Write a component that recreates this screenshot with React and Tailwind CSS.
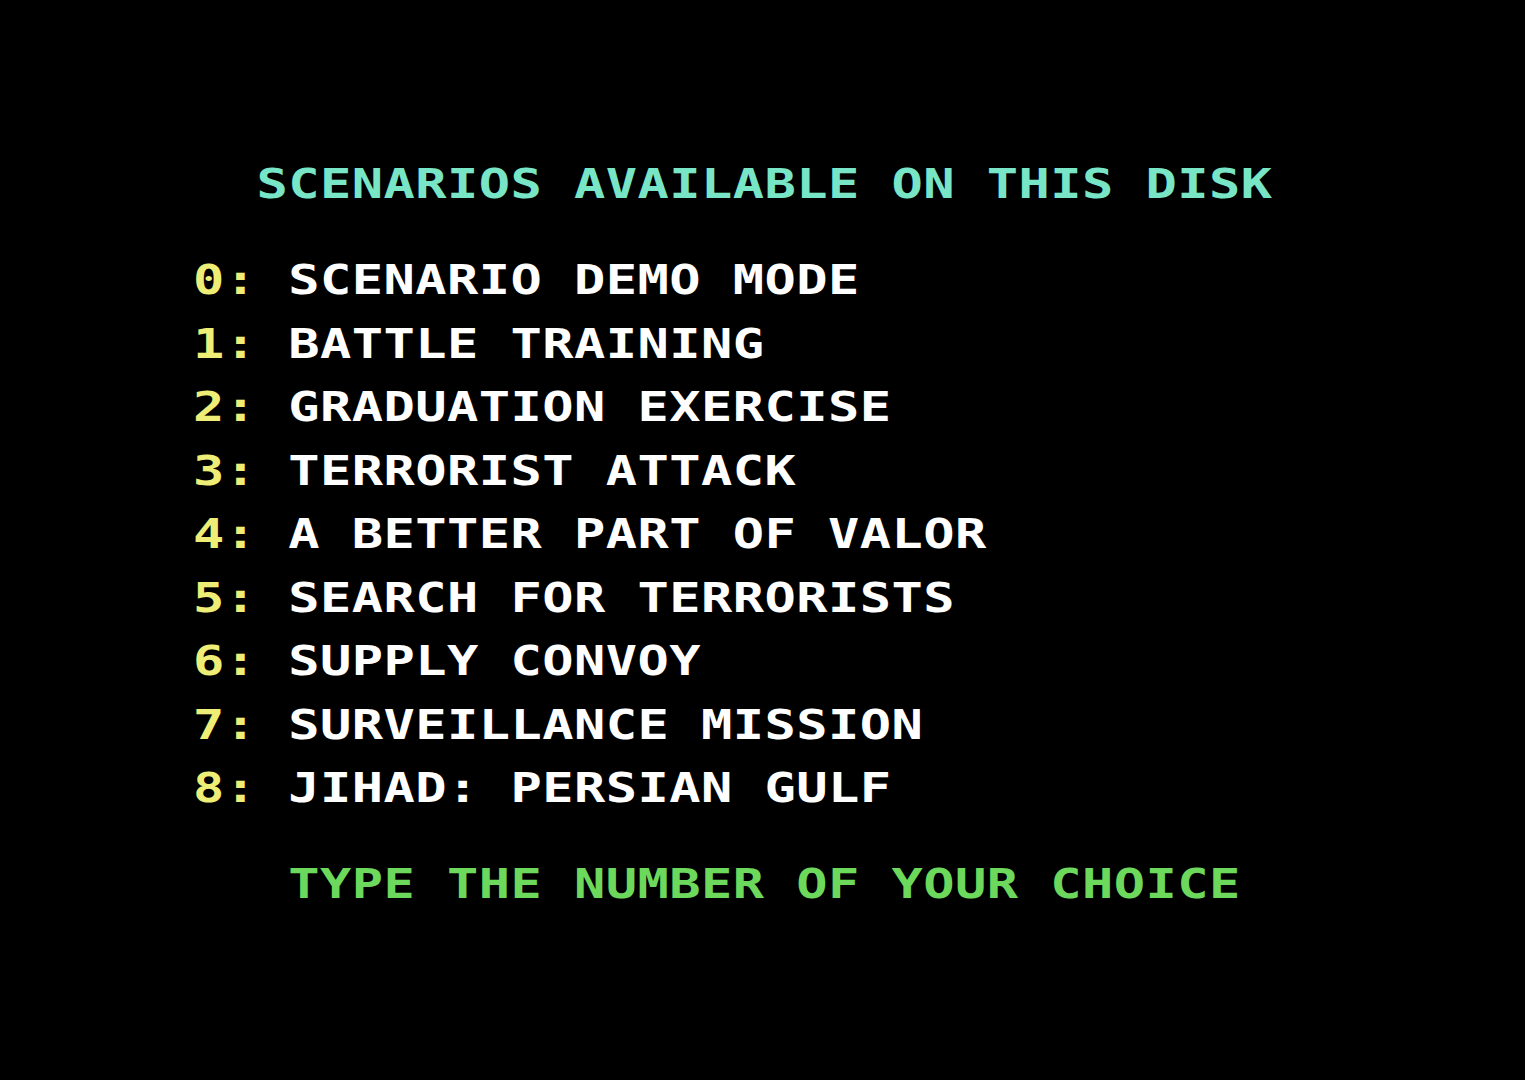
import React from 'react';

const scenarios = [
  'SCENARIO DEMO MODE',
  'BATTLE TRAINING',
  'GRADUATION EXERCISE',
  'TERRORIST ATTACK',
  'A BETTER PART OF VALOR',
  'SEARCH FOR TERRORISTS',
  'SUPPLY CONVOY',
  'SURVEILLANCE MISSION',
  'JIHAD: PERSIAN GULF',
];

// one text row of the C64 screen: 31.75px cell, rows are double spaced
const Row = ({ className = '', children }) => (
  <div className={`h-[31.75px] leading-[31.75px] whitespace-pre ${className}`}>{children}</div>
);

export default function App() {
  return (
    <div className="w-[1525px] h-[1080px] bg-black overflow-hidden font-['DejaVu_Sans_Mono',monospace] font-bold text-[40px] tracking-[0.34px]">
      <div className="pt-[169px] pl-[193px]">
        <div className="origin-left scale-x-[1.3] flex flex-col">
          <Row className="text-[#78e6c6]">{'  SCENARIOS AVAILABLE ON THIS DISK'}</Row>
          <div className="h-[64.25px]" />
          <div className="flex flex-col gap-[31.75px]">
            {scenarios.map((s, i) => (
              <Row key={i}>
                <span className="text-[#eeee77]">{`${i}:`}</span>
                <span className="text-white">{` ${s}`}</span>
              </Row>
            ))}
          </div>
          <div className="h-[64.25px]" />
          <Row className="text-[#6cd85c]">{'   TYPE THE NUMBER OF YOUR CHOICE'}</Row>
        </div>
      </div>
    </div>
  );
}
